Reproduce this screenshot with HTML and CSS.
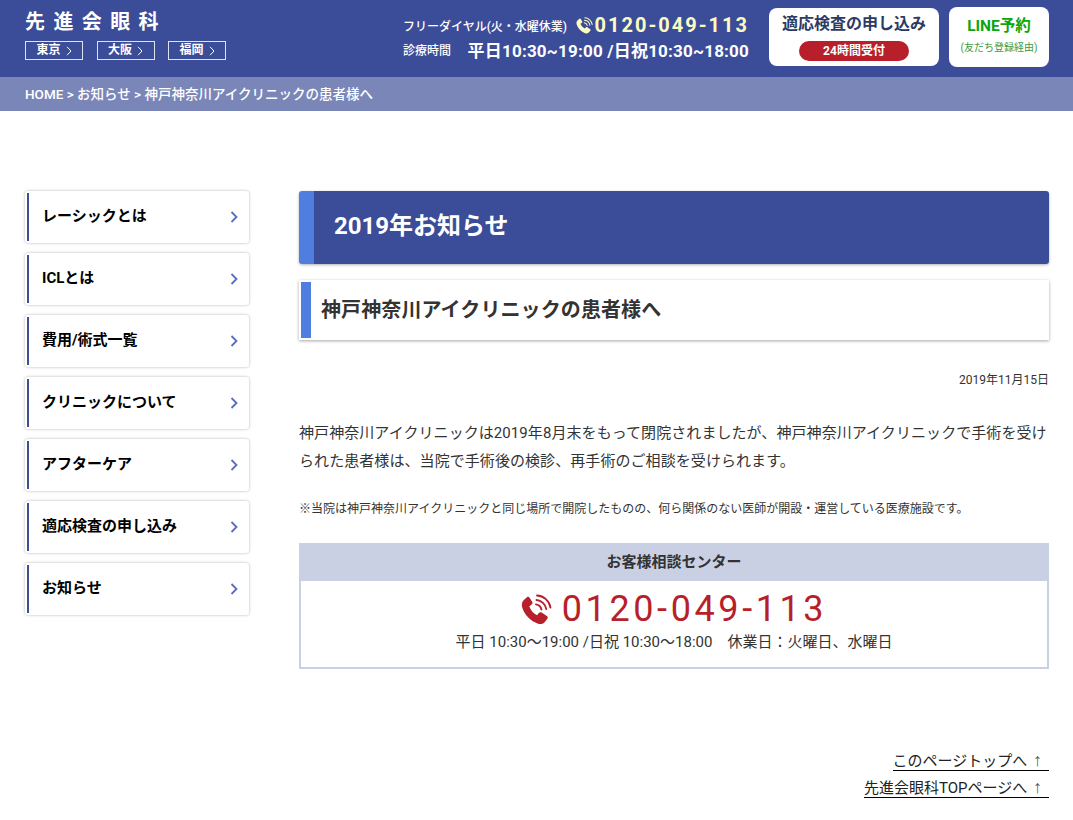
FILE: index.html
```html
<!DOCTYPE html>
<html lang="ja">
<head>
<meta charset="utf-8">
<title>神戸神奈川アイクリニックの患者様へ</title>
<link rel="stylesheet" href="styles.css">
</head>
<body>
<svg class="defs" width="0" height="0" aria-hidden="true">
  <symbol id="tel" viewBox="0 0 30 30">
    <path fill="currentColor" d="M6 3 2.500 6C.5 8 .5 11 1.500 14 3.500 20 9 26 16 28.500 19 29.500 21.500 29 23 27L25.500 24C26.200 23 26 22 25 21.400L20 18C19 17.400 18 17.500 17.300 18.400L15.500 20.500C11.500 18.500 9.500 15.500 8 12L10.500 10C11.300 9.300 11.400 8.400 10.800 7.500L8 3.200C7.500 2.500 6.700 2.500 6 3Z"/>
    <path fill="none" stroke="currentColor" stroke-width="1.800" stroke-linecap="round" d="M14.500 10c2.700.4 4.700 2.300 5.300 5M15 5.800c4.800.4 8.700 4 9.500 8.800M15.500 1.500c6.500.2 12 5.200 13 11.600"/>
  </symbol>
</svg>

<header class="topbar">
  <div class="brand">
    <div class="logo">先進会眼科</div>
    <nav class="cities">
      <a class="city" href="#">東京<svg class="city-arrow" viewBox="0 0 6 10"><path d="M1 .8 5 5 1 9.200"/></svg></a>
      <a class="city" href="#">大阪<svg class="city-arrow" viewBox="0 0 6 10"><path d="M1 .8 5 5 1 9.200"/></svg></a>
      <a class="city" href="#">福岡<svg class="city-arrow" viewBox="0 0 6 10"><path d="M1 .8 5 5 1 9.200"/></svg></a>
    </nav>
  </div>
  <div class="contact">
    <div class="contact-row">
      <span class="contact-label">フリーダイヤル(火・水曜休業)</span>
      <span class="top-tel"><svg class="top-tel-icon"><use href="#tel"/></svg>0120-049-113</span>
    </div>
    <div class="contact-row">
      <span class="contact-label">診療時間</span>
      <span class="hours">平日10:30~19:00 /日祝10:30~18:00</span>
    </div>
  </div>
  <a class="cta" href="#">
    <span class="cta-title">適応検査の申し込み</span>
    <span class="cta-pill">24時間受付</span>
  </a>
  <a class="line" href="#">
    <span class="line-title">LINE予約</span>
    <span class="line-sub">(友だち登録経由)</span>
  </a>
</header>

<div class="crumbs">HOME &gt; お知らせ &gt; 神戸神奈川アイクリニックの患者様へ</div>

<div class="layout">
  <aside class="side">
    <a class="side-item" href="#"><span class="side-text">レーシックとは</span><svg class="chev" viewBox="0 0 8 12"><path d="M1.500 1 6.500 6 1.500 11"/></svg></a>
    <a class="side-item" href="#"><span class="side-text">ICLとは</span><svg class="chev" viewBox="0 0 8 12"><path d="M1.500 1 6.500 6 1.500 11"/></svg></a>
    <a class="side-item" href="#"><span class="side-text">費用/術式一覧</span><svg class="chev" viewBox="0 0 8 12"><path d="M1.500 1 6.500 6 1.500 11"/></svg></a>
    <a class="side-item" href="#"><span class="side-text">クリニックについて</span><svg class="chev" viewBox="0 0 8 12"><path d="M1.500 1 6.500 6 1.500 11"/></svg></a>
    <a class="side-item" href="#"><span class="side-text">アフターケア</span><svg class="chev" viewBox="0 0 8 12"><path d="M1.500 1 6.500 6 1.500 11"/></svg></a>
    <a class="side-item" href="#"><span class="side-text">適応検査の申し込み</span><svg class="chev" viewBox="0 0 8 12"><path d="M1.500 1 6.500 6 1.500 11"/></svg></a>
    <a class="side-item" href="#"><span class="side-text">お知らせ</span><svg class="chev" viewBox="0 0 8 12"><path d="M1.500 1 6.500 6 1.500 11"/></svg></a>
  </aside>

  <main class="main">
    <h1 class="page-title">2019年お知らせ</h1>
    <h2 class="post-title"><span>神戸神奈川アイクリニックの患者様へ</span></h2>
    <p class="date">2019年11月15日</p>
    <p class="lead">神戸神奈川アイクリニックは2019年8月末をもって閉院されましたが、神戸神奈川アイクリニックで手術を受けられた患者様は、当院で手術後の検診、再手術のご相談を受けられます。</p>
    <p class="note">※当院は神戸神奈川アイクリニックと同じ場所で開院したものの、何ら関係のない医師が開設・運営している医療施設です。</p>
    <section class="center">
      <h3 class="center-head">お客様相談センター</h3>
      <div class="center-body">
        <div class="center-tel"><svg class="center-icon"><use href="#tel"/></svg>0120-049-113</div>
        <div class="center-hours">平日 10:30〜19:00 /日祝 10:30〜18:00　休業日：火曜日、水曜日</div>
      </div>
    </section>
    <div class="pagelinks">
      <a class="pagelink" href="#">このページトップへ <span class="up">↑</span></a>
      <a class="pagelink" href="#">先進会眼科TOPページへ <span class="up">↑</span></a>
    </div>
  </main>
</div>
</body>
</html>
```
FILE: styles.css
```css
* { box-sizing: border-box; }
html, body { margin: 0; padding: 0; }
body {
  width: 1073px;
  height: 820px;
  overflow: hidden;
  background: #fff;
  color: #333;
  font-family: Roboto, "Noto Sans CJK JP", sans-serif;
}
a { color: inherit; text-decoration: none; }
h1, h2, h3, p { margin: 0; }
.defs { position: absolute; }

.topbar {
  height: 77px;
  background: #3b4c99;
  color: #fff;
  display: flex;
  align-items: flex-start;
  padding: 0 24px 0 25px;
}
.brand { width: 378px; flex: none; }
.logo {
  font-size: 20px;
  font-weight: 700;
  letter-spacing: 8.400px;
  line-height: 24px;
  margin-top: 10px;
}
.cities { display: flex; gap: 13.500px; margin-top: 7px; }
.city {
  width: 58px;
  height: 19px;
  border: 1px solid #dfe3f0;
  font-size: 12px;
  font-weight: 700;
  line-height: 17px;
  display: flex;
  justify-content: center;
  align-items: center;
  gap: 5px;
}
.city-arrow { width: 6px; height: 10px; fill: none; stroke: #fff; stroke-width: 1; }

.contact { width: 346px; flex: none; margin-top: 13px; }
.contact-row { display: flex; align-items: center; justify-content: space-between; height: 24px; }
.contact-label { font-size: 12px; font-weight: 500; }
.top-tel {
  display: flex;
  align-items: center;
  color: #fcfbc0;
  font-size: 20px;
  font-weight: 700;
  letter-spacing: 2px;
}
.top-tel-icon { width: 17px; height: 17px; margin-right: 1px; }
.hours { font-size: 17px; font-weight: 700; letter-spacing: .2px; }

.cta {
  width: 170px;
  height: 58px;
  margin-top: 8px;
  margin-left: 20px;
  background: #fff;
  border-radius: 8px;
  display: flex;
  flex-direction: column;
  align-items: center;
  color: #2d3a63;
}
.cta-title { font-size: 16px; font-weight: 700; line-height: 22px; margin-top: 5px; }
.cta-pill {
  width: 110px;
  height: 20px;
  margin-top: 6px;
  background: #b71f2b;
  border-radius: 10px;
  color: #fff;
  font-size: 12px;
  font-weight: 700;
  line-height: 20px;
  text-align: center;
}
.line {
  width: 100px;
  height: 60px;
  margin: 7px 0 0 10px;
  background: #fff;
  border-radius: 8px;
  display: flex;
  flex-direction: column;
  align-items: center;
}
.line-title { color: #0aa50f; font-size: 15.500px; font-weight: 700; line-height: 22px; margin-top: 8px; }
.line-sub { color: #3c9a45; font-size: 10px; line-height: 14px; margin-top: 4px; }

.crumbs {
  height: 34px;
  background: #7a86b8;
  color: #fff;
  font-size: 13.500px;
  font-weight: 500;
  line-height: 34px;
  padding-left: 25px;
}

.layout {
  display: flex;
  padding: 80px 24px 0 25px;
  gap: 50px;
}
.side { width: 224px; flex: none; display: flex; flex-direction: column; gap: 10px; }
.side-item {
  height: 52px;
  background: #fff;
  border-radius: 3px;
  box-shadow: 0 0 3px rgba(0, 0, 0, .3);
  display: flex;
  align-items: center;
  justify-content: space-between;
  padding: 0 11px 5px 15px;
  position: relative;
  color: #000;
}
.side-item::before {
  content: "";
  position: absolute;
  left: 2px;
  top: 2px;
  bottom: 2px;
  width: 2px;
  background: #3f4f8f;
}
.side-text { font-size: 15px; font-weight: 700; padding-left: 2px; }
.chev { width: 8px; height: 12px; margin-top: 5px; fill: none; stroke: #5a6bc0; stroke-width: 1.800; }

.main { width: 750px; flex: none; }
.page-title {
  height: 73px;
  background: #3b4c99;
  border-left: 15px solid #4f7de0;
  border-radius: 3px;
  box-shadow: 0 1px 3px rgba(0, 0, 0, .3);
  color: #fff;
  font-size: 24px;
  font-weight: 700;
  line-height: 70px;
  padding-left: 20px;
}
.post-title {
  height: 60px;
  margin-top: 16px;
  padding: 2px;
  background: #fff;
  box-shadow: 0 1px 3px rgba(0, 0, 0, .35);
  font-size: 20px;
  font-weight: 700;
  color: #333;
  letter-spacing: .1px;
}
.post-title span {
  display: block;
  height: 56px;
  border-left: 10px solid #4f7de0;
  padding-left: 10px;
  line-height: 56px;
}
.date { margin-top: 30px; text-align: right; font-size: 12px; line-height: 20px; color: #333; }
.lead { margin-top: 29px; font-size: 15px; line-height: 28px; letter-spacing: .07px; }
.note { margin-top: 24px; font-size: 12px; line-height: 20px; }
.center { margin-top: 24px; height: 126px; border: 2px solid #cad0e3; border-top: 0; }
.center-head {
  height: 38px;
  margin: 0 -2px;
  background: #cad0e3;
  font-size: 15px;
  font-weight: 700;
  line-height: 38px;
  text-align: center;
}
.center-tel {
  display: flex;
  justify-content: center;
  align-items: center;
  color: #b71f2b;
  font-size: 36px;
  letter-spacing: 3.600px;
  line-height: 50px;
  margin-top: 3px;
}
.center-icon { width: 31px; height: 31px; margin-right: 10px; }
.center-hours { font-size: 15px; line-height: 24px; text-align: center; margin-top: -4px; }
.pagelinks {
  margin-top: 84px;
  display: flex;
  flex-direction: column;
  align-items: flex-end;
  gap: 9px;
}
.pagelink {
  color: #222;
  font-size: 15px;
  line-height: 17px;
  border-bottom: 1px solid #000;
}
.up {
  font-family: "Liberation Sans", sans-serif;
  font-size: 18px;
  line-height: 0;
  color: #555;
  margin: 0 7px 0 2px;
}
```
